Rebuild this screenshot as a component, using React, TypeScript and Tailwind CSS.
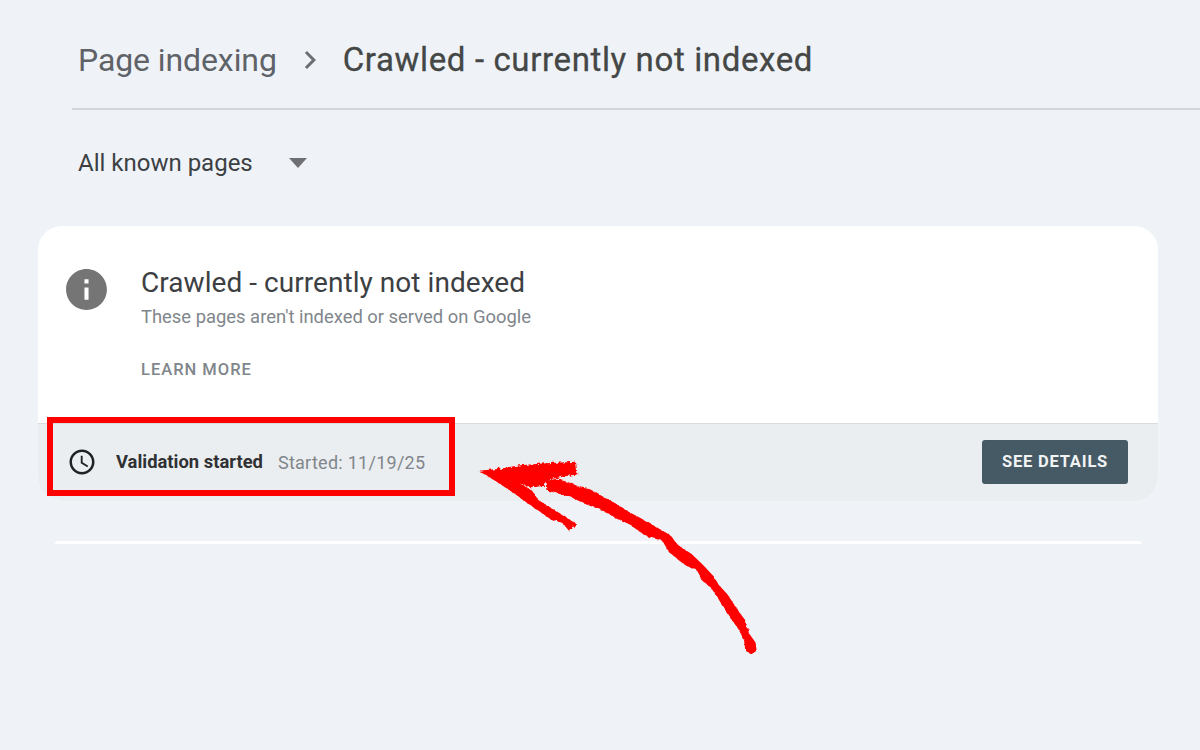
const shaft =
  "230,122 260,116 300,128 330,141 360,148 400,170 440,192 470,212 510,233 550,256 600,285 625,316 665,342 700,376 730,408 742,430 772,463 802,508 827,543 837,580 857,608 860,632 845,642 826,632 822,600 805,567 787,542 767,512 742,472 722,442 697,422 677,387 650,378 636,368 597,337 577,302 527,288 477,252 437,235 397,211 347,193 307,173 267,161 232,152";
const head =
  "25,92 90,86 150,76 240,69 318,65 322,103 290,108 240,118 222,138 180,142 148,130 185,150 205,180 250,208 318,250 300,275 280,252 240,236 210,216 160,181 125,155 80,125";

export default function App() {
  return (
    <div className="relative w-[1200px] h-[750px] overflow-hidden bg-[#eff3f8] font-['Roboto',sans-serif]">
      {/* breadcrumb */}
      <div className="ml-[72px] h-[110px] border-b-2 border-[#d4d6d8] pl-[6px] pt-[36px] flex items-start">
        <span className="text-[32px] leading-[48px] tracking-[-0.1px] text-[#5f6368]">Page indexing</span>
        <svg className="w-[36px] h-[36px] ml-[15px] mt-[6px]" viewBox="0 0 24 24" fill="#6b6e72">
          <path d="M8.6 16.6 13.2 12 8.6 7.4 10 6l6 6-6 6z" />
        </svg>
        <span className="ml-[15px] text-[33px] leading-[48px] tracking-[0.63px] text-[#444746] [-webkit-text-stroke:0.3px_#444746]">Crawled - currently not indexed</span>
      </div>

      {/* filter */}
      <div className="ml-[78px] mt-[37px] h-[32px] flex items-center gap-[36px]">
        <span className="text-[24px] text-[#3c4043]">All known pages</span>
        <div className="w-0 h-0 border-x-[9px] border-x-transparent border-t-[10px] border-t-[#6e7073]" />
      </div>

      {/* card */}
      <div className="ml-[38px] mt-[47px] w-[1120px] rounded-[24px] bg-white overflow-hidden">
        <div className="h-[198px] flex items-start pl-[24px] pt-[32px] border-b border-[#dadce0]">
          <svg className="w-[49px] h-[49px] shrink-0 mt-[7px]" viewBox="0 0 24 24" fill="#757575">
            <path d="M12 2C6.48 2 2 6.48 2 12s4.48 10 10 10 10-4.48 10-10S17.52 2 12 2zm1 15h-2v-6h2v6zm0-8h-2V7h2v2z" />
          </svg>
          <div className="ml-[30px] flex flex-col">
            <span className="text-[28px] leading-[48px] mt-[1px] tracking-[0.05px] text-[#3c4043]">Crawled - currently not indexed</span>
            <span className="text-[18.4px] leading-[22px] mt-[-1px] text-[#80868b]">These pages aren't indexed or served on Google</span>
            <span className="text-[16.5px] leading-[20px] mt-[32px] font-medium tracking-[1px] text-[#80868b]">LEARN MORE</span>
          </div>
        </div>
        <div className="h-[77px] bg-[#ebeef1] flex items-center pl-[29px] pr-[30px] pb-[1px]">
          <svg className="w-[30px] h-[30px] shrink-0" viewBox="0 0 24 24" fill="#202124">
            <path d="M11.99 2C6.47 2 2 6.48 2 12s4.47 10 9.99 10C17.52 22 22 17.52 22 12S17.52 2 11.99 2zM12 20c-4.42 0-8-3.58-8-8s3.58-8 8-8 8 3.58 8 8-3.58 8-8 8zm.5-13H11v6l5.25 3.15.75-1.23-4.5-2.67z" />
          </svg>
          <span className="ml-[19px] text-[18.4px] font-bold text-[#303134]">Validation started</span>
          <span className="ml-[15px] text-[18px] tracking-[0.27px] text-[#80868b]">Started: 11/19/25</span>
          <button className="ml-auto w-[146px] h-[44px] rounded-[3px] bg-[#455a64] text-[16.5px] font-bold tracking-[0.8px] text-[#f1f3f4]">SEE DETAILS</button>
        </div>
      </div>

      {/* next card, only its top edge shows */}
      <div className="ml-[55px] mt-[40px] w-[1087px] h-[3px] rounded-t-[8px] bg-white" />

      {/* red annotation */}
      <div className="absolute left-[47px] top-[417px] w-[408px] h-[79px] border-[6px] border-[#ff0000]" />
      <svg className="absolute left-[470px] top-[440px] w-[300px] h-[220px]" viewBox="0 0 900 660" fill="#ff0000">
        <defs>
          <filter id="rough" x="-5%" y="-5%" width="110%" height="110%">
            <feTurbulence type="fractalNoise" baseFrequency="0.09" numOctaves="2" seed="4" />
            <feDisplacementMap in="SourceGraphic" scale="16" />
          </filter>
        </defs>
        <g filter="url(#rough)">
          <polygon points={head} />
          <polygon points={shaft} />
        </g>
      </svg>
    </div>
  );
}
